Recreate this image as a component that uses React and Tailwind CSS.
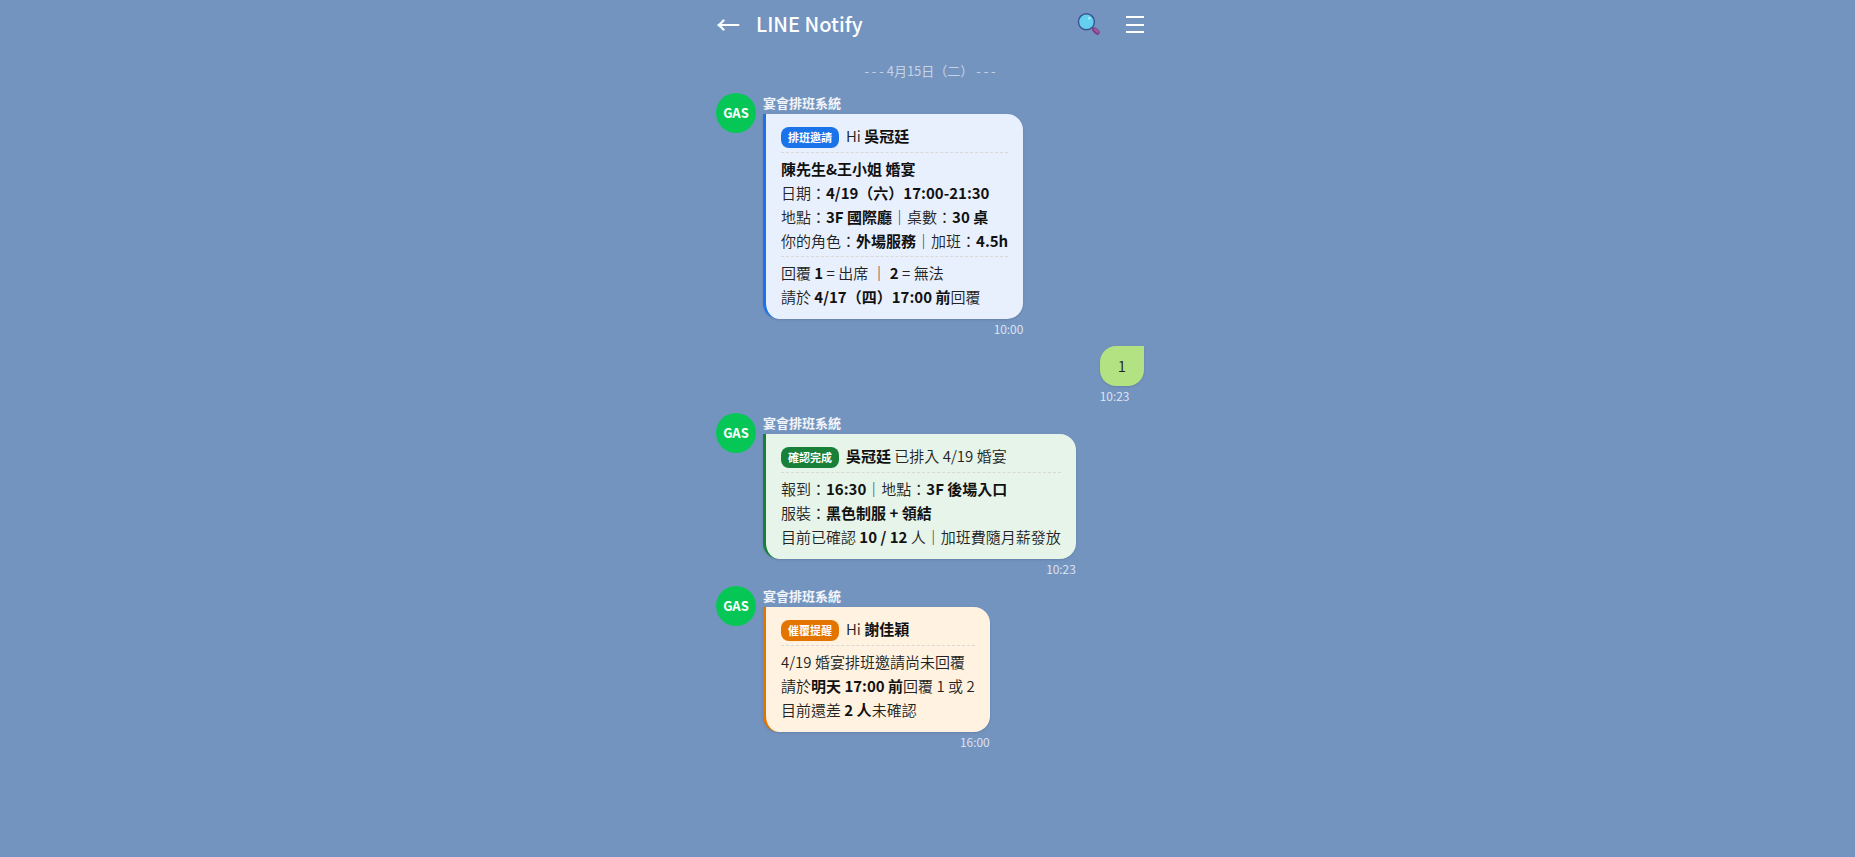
import React from "react";

const messages = [
  {
    id: 1,
    tone: "blue",
    badge: "排班邀請",
    time: "10:00",
    head: <>Hi <b>吳冠廷</b></>,
    blocks: [
      [
        <b>陳先生&amp;王小姐 婚宴</b>,
        <>日期：<b>4/19（六）17:00-21:30</b></>,
        <>地點：<b>3F 國際廳</b>｜桌數：<b>30 桌</b></>,
        <>你的角色：<b>外場服務</b>｜加班：<b>4.5h</b></>
      ],
      [
        <>回覆 <b>1</b> = 出席 ｜ <b>2</b> = 無法</>,
        <>請於 <b>4/17（四）17:00 前</b>回覆</>
      ]
    ]
  },
  { id: 2, mine: true, text: "1", time: "10:23" },
  {
    id: 3,
    tone: "green",
    badge: "確認完成",
    time: "10:23",
    head: <><b>吳冠廷</b> 已排入 4/19 婚宴</>,
    blocks: [
      [
        <>報到：<b>16:30</b>｜地點：<b>3F 後場入口</b></>,
        <>服裝：<b>黑色制服 + 領結</b></>,
        <>目前已確認 <b>10 / 12</b> 人｜加班費隨月薪發放</>
      ]
    ]
  },
  {
    id: 4,
    tone: "orange",
    badge: "催覆提醒",
    time: "16:00",
    head: <>Hi <b>謝佳穎</b></>,
    blocks: [
      [
        <>4/19 婚宴排班邀請尚未回覆</>,
        <>請於<b>明天 17:00 前</b>回覆 1 或 2</>,
        <>目前還差 <b>2 人</b>未確認</>
      ]
    ]
  }
];

const tones = {
  blue: { bubble: "bg-[#e8f0fe] border-[#1a73e8]", badge: "bg-[#1a73e8]" },
  green: { bubble: "bg-[#e6f4ea] border-[#188038]", badge: "bg-[#188038]" },
  orange: { bubble: "bg-[#fff2e0] border-[#e37400]", badge: "bg-[#e37400]" }
};

const SearchIcon = () => (
  <svg viewBox="0 0 24 24" className="w-6 h-6" aria-hidden="true">
    <path d="M15.4 15.6l1.8 1.8" stroke="#50628c" strokeWidth="2" />
    <path d="M17.6 17.8l2.8 2.6" stroke="#7d3f86" strokeWidth="5" strokeLinecap="round" />
    <path d="M18.2 17.4l2.6 2.4" stroke="#a05a9c" strokeWidth="2.4" strokeLinecap="round" />
    <circle cx="9.4" cy="9.8" r="8" fill="#62d0ee" stroke="#3f5593" strokeWidth="1.5" />
    <circle cx="12.4" cy="6.2" r="1.2" fill="#b5ecf8" />
  </svg>
);

const MenuIcon = () => (
  <svg viewBox="0 0 18 20" className="w-[18px] h-5" aria-hidden="true">
    <path d="M0 3h18M0 11h18M0 18h18" stroke="white" strokeWidth="2" />
  </svg>
);

const Incoming = ({ message }) => {
  const tone = tones[message.tone];
  return (
    <article className="flex items-start gap-[7px]">
      <div className="w-10 h-10 shrink-0 rounded-full bg-[#06c755] flex items-center justify-center text-[13px] font-bold text-white">
        GAS
      </div>
      <div className="flex flex-col">
        <h2 className="mb-[2px] text-[13px] leading-[19px] font-bold text-white/90">宴會排班系統</h2>
        <div className={`rounded-2xl rounded-tl-none border-l-[3px] px-[15px] py-[10px] shadow-sm ${tone.bubble}`}>
          <p className="flex items-end pb-px">
            <span className={`rounded-lg px-[7px] mr-[7px] text-[11px] leading-[21px] font-bold text-white ${tone.badge}`}>
              {message.badge}
            </span>
            <span>{message.head}</span>
          </p>
          {message.blocks.map((lines, i) => (
            <div key={i} className="border-t border-dashed border-[#d8d8d8] mt-[3px] pt-1">
              {lines.map((line, j) => (
                <p key={j}>{line}</p>
              ))}
            </div>
          ))}
        </div>
        <time className="self-end text-xs leading-[19px] text-white/80">{message.time}</time>
      </div>
    </article>
  );
};

const Outgoing = ({ message }) => (
  <article className="self-end flex flex-col items-start">
    <p className="rounded-2xl rounded-tr-none bg-[#b2e281] px-[18px] py-2 shadow-sm">{message.text}</p>
    <time className="text-xs leading-[19px] text-white/80">{message.time}</time>
  </article>
);

const App = () => {
  return (
    <div className="min-h-screen bg-[#7494c0] font-['Noto_Sans_CJK_TC',sans-serif] text-[15px] leading-6 font-[350] text-[#222222] [&_b]:font-bold [&_b]:text-[#111111]">
      <main className="w-full max-w-[463px] mx-auto pl-5 pr-[15px] pb-6">
        <header className="flex items-center h-12 text-white">
          <button type="button" aria-label="返回" className="text-2xl leading-none font-medium">←</button>
          <h1 className="ml-4 text-xl font-medium">LINE Notify</h1>
          <button type="button" aria-label="搜尋" className="ml-auto mr-[25px]"><SearchIcon /></button>
          <button type="button" aria-label="選單"><MenuIcon /></button>
        </header>

        <p className="mt-3 mb-3 text-center text-[13px] leading-[21px] font-normal text-white/60">- - - 4月15日（二） - - -</p>

        <section className="flex flex-col gap-2">
          {messages.map((message) =>
            message.mine ? (
              <Outgoing key={message.id} message={message} />
            ) : (
              <Incoming key={message.id} message={message} />
            )
          )}
        </section>
      </main>
    </div>
  );
};

export default App;
